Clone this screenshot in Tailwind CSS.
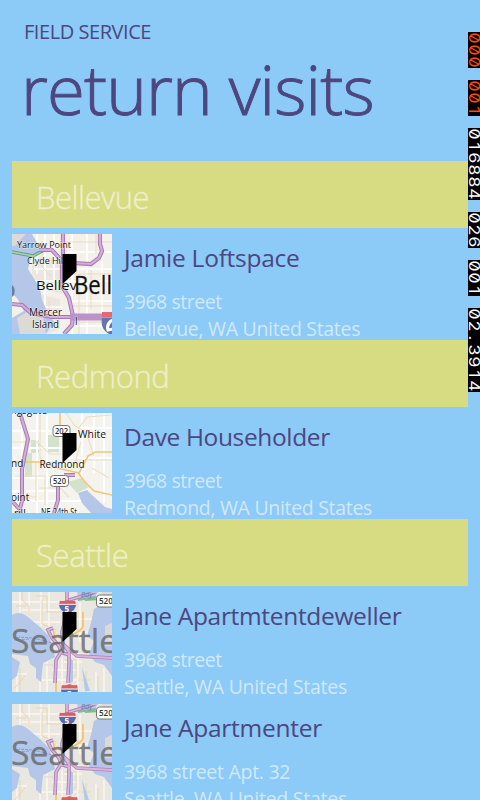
<!DOCTYPE html>
<html lang="en">
<head>
<meta charset="utf-8">
<title>Field Service</title>
<script src="https://cdn.jsdelivr.net/npm/@tailwindcss/browser@4"></script>
</head>
<body class="relative h-[800px] w-[480px] overflow-hidden bg-[#8ccaf7] font-['Open_Sans','Noto_Sans',sans-serif] text-[#4d467f]">

<svg class="hidden">
  <defs>
    <symbol id="pin" viewBox="0 0 15 30"><path d="M.5 0H14.5V17L.5 30Z" fill="#000"/></symbol>
    <symbol id="i5" viewBox="0 0 18 18" preserveAspectRatio="none">
      <path d="M1 1Q5 2 9 0Q13 2 17 1L18 6H0Z" fill="#d9605f"/>
      <path d="M0 6H18Q18 13 9 18Q0 13 0 6Z" fill="#5b6cae"/>
      <path d="M0 5.6H18" stroke="#fff" stroke-width="1"/>
    </symbol>
    <symbol id="seattle" viewBox="0 0 100 100">
      <rect width="100" height="100" fill="#eae7e0"/>
      <g fill="none" stroke="#fbf7ed" stroke-width="1.5"><path d="M8 0V22M17 0V24M29 0V34M37 0V38M0 10H47M10 18H48M20 30H48M60 12V45M68 10V50M52 27H80M55 40H83M52 70H70M40 78H65M30 88H70M66 60V100M35 70V100M28 75V100M50 66V100M84 80V100M92 76V100M0 82H15M5 74V100"/></g>
      <g fill="none" stroke="#e6d7b4" stroke-width="1"><path d="M10 0V8L17 14V24M24 4H35V20H48M30 8V32L44 38M4 14H14M56 16V36M62 15V34L76 45M53 68H64V84H54M8 76V100M13 84L3 96M32 73H42M86 84V100M66 88H78M74 79V100"/></g>
      <path d="M0 23Q8 18 17 26L29 36L36 43L41 54L43 65L31 71L29 90L24 86V76L18 72L16 64L0 62Z" fill="#b4c7e8"/>
      <path d="M82 17L100 6V84L92 73L83 70L77 62L82 49L75 44L79 31Z" fill="#b4c7e8"/>
      <path d="M65 0H86L82 6L67 8ZM48 11L64 10L55 14ZM57 65L61 69V89L58 92ZM0 65L8 70L5 84L0 88ZM70 75L78 99H73Z" fill="#b4c7e8"/>
      <path d="M90 0H100V10L90 15L83 12ZM93 34L100 31V54H93Z" fill="#ddd9d6"/>
      <path d="M1 46C16 44 28 47 43 52M2 48L18 47" fill="none" stroke="#7792cd" stroke-width=".8" stroke-dasharray="3 1"/>
      <path d="M71 20V34Q70 39 59 43M44 73V100M41 37L44 50L49 60" fill="none" stroke="#f2c56e" stroke-width="1.800"/>
      <path d="M66 8L84 5M73 8L88 7" fill="none" stroke="#81bd91" stroke-width="2"/>
      <g fill="none" stroke="#aa80b6" stroke-width="3.600"><path d="M55 0V20L50 40L51 52L57 60V72L56 91M41 36L36 38L40 46L47 54L49 60L44 68L43 91M51 52L65 64L100 66M48 60L57 63M57 8L74 3L83 0"/></g>
      <g fill="none" stroke="#d8b7dc" stroke-width="1.800"><path d="M55 0V20L50 40L51 52L57 60V72L56 91M41 36L36 38L40 46L47 54L49 60L44 68L43 91M51 52L65 64L100 66M48 60L57 63M57 8L74 3L83 0"/></g>
      <text x="-1" y="60.500" font-size="33" textLength="107" lengthAdjust="spacingAndGlyphs" fill="#666" fill-opacity=".8" stroke="#666" stroke-opacity=".5" stroke-width=".5">Seattle</text>
      <text x="69" y="5" font-size="7" font-style="italic" fill="#587fac">Bay</text>
      <rect x="84.500" y="3" width="24" height="12" rx="3" fill="#fff" stroke="#777"/>
      <text x="87" y="12" font-size="8" font-weight="600" fill="#333">520</text>
      <use href="#i5" x="47" y="8" width="17" height="14"/>
      <text x="52.500" y="19.500" font-size="8" font-weight="700" fill="#fff">5</text>
      <use href="#i5" x="49" y="92" width="17" height="16"/>
      <text x="55" y="105" font-size="8" font-weight="700" fill="#fff">5</text>
      <use href="#pin" x="50" y="20" width="15" height="30"/>
    </symbol>
  </defs>
</svg>

<div class="flex flex-col">
  <header class="h-[161px] pl-6 pt-[18px]">
    <p class="h-7 text-[20px] leading-7 tracking-[-0.45px] whitespace-nowrap"><span>FIELD SERVICE</span></p>
    <h1 class="-ml-[3px] -mt-[7px] text-[69px] leading-[98px] font-light tracking-[-0.9px] whitespace-nowrap [-webkit-text-stroke:0.9px_#4d467f]"><span>return visits</span></h1>
  </header>

  <main class="flex flex-col px-3">
    <h2 class="relative h-[67px] bg-[#d7db82] pl-6 pt-[14px] text-[31px] leading-[44px] font-light text-[#efefc9] [-webkit-text-stroke:0.4px_#efefc9]"><span class="tracking-[-0.5px]">Bellevue</span></h2>
    <article class="flex h-28 gap-3 pt-[6px]">
      <svg class="size-[100px] shrink-0" viewBox="0 0 100 100">
        <rect width="100" height="100" fill="#f3f1ea"/>
        <path d="M20 22L50 25V60L30 55L20 40ZM25 60L48 65V95L35 100L30 72Z" fill="#ebe6df"/>
        <g fill="none" stroke="#fff" stroke-width="1.600"><path d="M25 0V40M33 0V80M42 0V55M60 0V100M75 0V100M90 0V80M22 35H100M20 47H100M55 67H100M55 18H100M60 92H100M27 73H50"/></g>
        <g fill="none" stroke="#e7dcc6" stroke-width="1"><path d="M54 8H100M67 40V100M79 36V75M55 40H100M60 72H100M84 0V20M30 7V33L39 42M37 67V77L45 84M66 88H90"/></g>
        <path d="M0 0H20L24 7L30 16L19 24L16 35L21 43L28 54L30 66L36 79L42 88L34 100H0V84L12 77L5 64L0 60Z" fill="#b4c7e8"/>
        <path d="M0 0H14L9 5L3 12H0ZM5 84L20 75L31 81L34 100H8Z" fill="#ddd9d4"/>
        <path d="M0 51Q4 54 2 61L0 63Z" fill="#6e7c9f"/>
        <path d="M0 18L21 22L34 15" fill="none" stroke="#60a37d" stroke-width="3.400"/>
        <path d="M0 18L21 22L34 15" fill="none" stroke="#aad0b6" stroke-width="1.400"/>
        <g fill="none" stroke="#a878b5" stroke-width="4.200"><path d="M27 16H40L50 27V52L57 64L61 82L60 91L52 100M0 70L10 71L19 79L40 83H100M61 29L79 30L87 24L90 17L88 10V0M51 0V28"/></g>
        <g fill="none" stroke="#d1addc" stroke-width="2.200"><path d="M27 16H40L50 27V52L57 64L61 82L60 91L52 100M0 70L10 71L19 79L40 83H100M61 29L79 30L87 24L90 17L88 10V0M51 0V28"/></g>
        <path d="M58 83H100" stroke="#bd92c9" stroke-width="7"/>
        <g fill="#111" stroke="#fff" stroke-opacity=".6" stroke-width="1.200" paint-order="stroke" stroke-linejoin="round">
          <text x="5" y="14" font-size="9.500" textLength="54" lengthAdjust="spacingAndGlyphs">Yarrow Point</text>
          <text x="15" y="30" font-size="9.500" textLength="36" lengthAdjust="spacingAndGlyphs">Clyde Hil</text>
          <text x="24" y="55.500" font-size="13.500" textLength="41" lengthAdjust="spacingAndGlyphs">Bellev</text>
          <text x="17" y="82" font-size="10" textLength="33" lengthAdjust="spacingAndGlyphs">Mercer</text>
          <text x="20" y="94" font-size="10" textLength="27" lengthAdjust="spacingAndGlyphs">Island</text>
          <text x="63" y="91" font-size="10">l</text>
          <text x="62" y="60" font-size="25" font-weight="500" textLength="38" lengthAdjust="spacingAndGlyphs" stroke="#111" stroke-width=".4">Bell</text>
        </g>
        <path d="M90 78H101V83H90Z" fill="#e46970"/><path d="M90 84H101V100H97Q88 95 90 84Z" fill="#6673ac"/><path d="M101 86Q94 89 96 96L101 95" fill="none" stroke="#fff" stroke-width="3"/>
        <use href="#pin" x="50" y="20" width="15" height="30"/>
      </svg>
      <div class="flex flex-col whitespace-nowrap pt-[6px]">
        <h3 class="h-12 shrink-0 text-[24.500px] leading-[36px]"><span class="tracking-[-0.26px]">Jamie Loftspace</span></h3>
        <p class="text-[19.500px] leading-[27px] text-[#d0e9fc]"><span class="tracking-[-0.45px]">3968 street</span><br><span class="tracking-[-0.31px]">Bellevue, WA United States</span></p>
      </div>
    </article>

    <h2 class="relative h-[67px] bg-[#d7db82] pl-6 pt-[14px] text-[31px] leading-[44px] font-light text-[#efefc9] [-webkit-text-stroke:0.4px_#efefc9]"><span class="tracking-[-0.4px]">Redmond</span></h2>
    <article class="flex h-28 gap-3 pt-[6px]">
      <svg class="size-[100px] shrink-0" viewBox="0 0 100 100">
        <rect width="100" height="100" fill="#f5f3ed"/>
        <path d="M35 22H47V39H35ZM19 27H27V40H19ZM55 69L70 65L77 74L65 80ZM13 40H20V65H13Z" fill="#d5e2cb"/>
        <g fill="none" stroke="#fff" stroke-width="2"><path d="M0 18H50M0 35H50M0 65H45M0 78H50M10 0V100M25 0V100M35 0V100M65 15H100M55 45H100M70 0V65M82 0V60M92 0V90M0 88H70"/></g>
        <g fill="none" stroke="#eadfc7" stroke-width="1.200"><path d="M0 29H25L38 41H48M28 0V45L38 54M3 63H33V92M24 48V88M54 0L63 13L74 19L82 43M63 47H100M69 29L61 56M80 55L97 65M67 15L75 4L100 2M27 75H48L57 84M0 84H25"/></g>
        <path d="M66 80L75 77L81 83L93 94L100 96V100H79L70 90Z" fill="#b4c7e8"/>
        <path d="M0 49H29L49 56L67 60L76 43L83 39H100M48 0V14M66 60L73 69L82 78L100 82" fill="none" stroke="#f0c77a" stroke-width="1.700"/>
        <g fill="none" stroke="#a67cb2" stroke-width="4"><path d="M8 0L16 26L10 56V88L7 100M46 73V87L42 100M52 62H63M0 88L9 98"/></g>
        <g fill="none" stroke="#ceb0d8" stroke-width="2"><path d="M8 0L16 26L10 56V88L7 100M46 73V87L42 100M52 62H63M0 88L9 98"/></g>
        <g fill="#fff" stroke="#777"><rect x="41" y="12.500" width="17" height="11" rx="3"/><rect x="38.500" y="62.500" width="18" height="11" rx="3"/></g>
        <g fill="#333" font-size="8" font-weight="600"><text x="43" y="21" textLength="13" lengthAdjust="spacingAndGlyphs">202</text><text x="41" y="71" textLength="13" lengthAdjust="spacingAndGlyphs">520</text></g>
        <g fill="#111" stroke="#fff" stroke-opacity=".6" stroke-width="1.200" paint-order="stroke" stroke-linejoin="round" font-size="10">
          <text x="-4" y="1">ingsgate</text>
          <text x="66" y="24.500" textLength="28" lengthAdjust="spacingAndGlyphs">White</text>
          <text x="-1" y="54">nd</text>
          <text x="27.500" y="54.500" textLength="45" lengthAdjust="spacingAndGlyphs">Redmond</text>
          <text x="-1" y="88">oint</text>
          <text x="29" y="103" textLength="36" lengthAdjust="spacingAndGlyphs">NE 24th St</text>
          <text x="2" y="104">rill</text>
        </g>
        <use href="#pin" x="50" y="20" width="15" height="30"/>
      </svg>
      <div class="flex flex-col whitespace-nowrap pt-[6px]">
        <h3 class="h-12 shrink-0 text-[24.500px] leading-[36px]"><span class="tracking-[-0.37px]">Dave Householder</span></h3>
        <p class="text-[19.500px] leading-[27px] text-[#d0e9fc]"><span class="tracking-[-0.45px]">3968 street</span><br><span class="tracking-[-0.31px]">Redmond, WA United States</span></p>
      </div>
    </article>

    <h2 class="relative h-[67px] bg-[#d7db82] pl-6 pt-[14px] text-[31px] leading-[44px] font-light text-[#efefc9] [-webkit-text-stroke:0.4px_#efefc9]"><span class="tracking-[-0.4px]">Seattle</span></h2>
    <article class="flex h-28 gap-3 pt-[6px]">
      <svg class="size-[100px] shrink-0"><use href="#seattle" width="100" height="100"/></svg>
      <div class="flex flex-col whitespace-nowrap pt-[6px]">
        <h3 class="h-12 shrink-0 text-[24.500px] leading-[36px]"><span class="tracking-[-0.32px]">Jane Apartmtentdeweller</span></h3>
        <p class="text-[19.500px] leading-[27px] text-[#d0e9fc]"><span class="tracking-[-0.45px]">3968 street</span><br><span class="tracking-[-0.26px]">Seattle, WA United States</span></p>
      </div>
    </article>
    <article class="flex h-28 gap-3 pt-[6px]">
      <svg class="size-[100px] shrink-0"><use href="#seattle" width="100" height="100"/></svg>
      <div class="flex flex-col whitespace-nowrap pt-[6px]">
        <h3 class="h-12 shrink-0 text-[24.500px] leading-[36px]"><span class="tracking-[-0.26px]">Jane Apartmenter</span></h3>
        <p class="text-[19.500px] leading-[27px] text-[#d0e9fc]"><span class="tracking-[-0.28px]">3968 street Apt. 32</span><br><span class="tracking-[-0.26px]">Seattle, WA United States</span></p>
      </div>
    </article>
  </main>
</div>

<!-- Frame-rate counters: each string runs downwards on a 12px pitch -->
<svg class="absolute top-8 left-[468px] h-[360px] w-3 font-['Inter',sans-serif] font-normal" viewBox="0 0 12 360">
  <path d="M0 0H12V36H0ZM0 48H12V84H0ZM0 96H12V168H0ZM0 180H12V216H0ZM0 228H12V264H0ZM0 276H12V360H0Z" fill="#000"/>
  <g transform="translate(1 0) rotate(90) scale(1.250 1)" font-size="14" text-anchor="middle" style="font-feature-settings:'zero'">
    <g fill="#ff4a00"><text y="0" x="4.8 14.4 24">000</text><text x="43.2 52.8 62.4">001</text></g>
    <g fill="#fff"><text x="81.600 91.200 100.800 110.400 120 129.600">016884</text><text x="148.800 158.400 168">026</text><text x="187.200 196.800 206.400">001</text><text x="225.600 235.200 244.800 254.400 264 273.600 283.200">02.3914</text></g>
  </g>
</svg>
</body>
</html>
